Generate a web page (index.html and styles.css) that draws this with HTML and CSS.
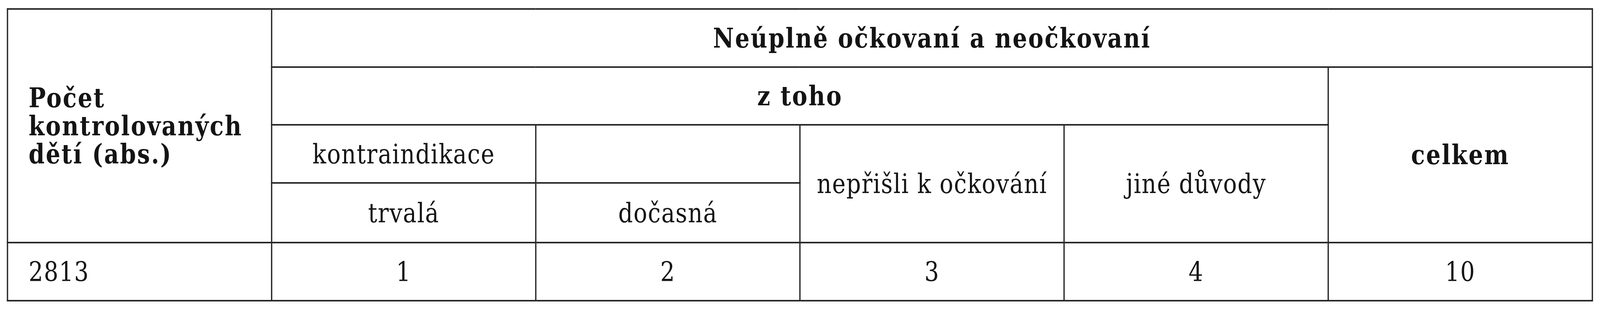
FILE: index.html
```html
<!DOCTYPE html>
<html lang="cs">
<head>
<meta charset="utf-8">
<title>Neúplně očkovaní a neočkovaní</title>
<link rel="stylesheet" href="styles.css">
</head>
<body>
<div class="sheet">
  <table class="stats">
    <colgroup>
      <col class="c"><col class="c"><col class="c"><col class="c"><col class="c"><col class="c">
    </colgroup>
    <tbody>
      <tr class="r1">
        <td class="lead b" rowspan="4">Počet<br>kontrolovaných<br>dětí (abs.)</td>
        <td class="b" colspan="5">Neúplně očkovaní a neočkovaní</td>
      </tr>
      <tr class="r2">
        <td class="b" colspan="4">z toho</td>
        <td class="b" rowspan="3">celkem</td>
      </tr>
      <tr class="r3">
        <td>kontraindikace</td>
        <td></td>
        <td rowspan="2">nepřišli k očkování</td>
        <td rowspan="2">jiné důvody</td>
      </tr>
      <tr class="r4">
        <td>trvalá</td>
        <td>dočasná</td>
      </tr>
      <tr class="r5">
        <td class="lead">2813</td>
        <td>1</td>
        <td>2</td>
        <td>3</td>
        <td>4</td>
        <td>10</td>
      </tr>
    </tbody>
  </table>
</div>
</body>
</html>
```

FILE: styles.css
```css
html, body {
  margin: 0;
  padding: 0;
  background: #ffffff;
  overflow: hidden;
}

body {
  font-family: "DejaVu Serif", "Liberation Serif", serif;
  color: #141414;
}

/* the sheet is drawn at the reference's 4911px width */
.sheet {
  width: 4910px;
  padding: 21px 0 0 21px;
  box-sizing: border-box;
  transform-origin: 0 0;
}

/* the browser window here is narrower than 4911px: fit the sheet to it */
@media (max-width: 4910px) {
  .sheet {
    transform: scaleX(0.8338);
  }
}

.stats {
  border-collapse: collapse;
  table-layout: fixed;
  width: 4866px;
}

.stats .c {
  width: 811px;
}

.stats td {
  border: 4px solid #272727;
  padding: 0 20px;
  text-align: center;
  vertical-align: middle;
  font-size: 70px;
  line-height: 72px;
  letter-spacing: 2px;
  font-weight: normal;
}

.stats td.b {
  font-weight: bold;
  letter-spacing: 3.6px;
}

.stats td.lead {
  text-align: left;
  padding-left: 63px;
}

.r1 { height: 149px; }
.r2 { height: 148px; }
.r3 { height: 149px; }
.r4 { height: 153px; }
.r5 { height: 149px; }
```
